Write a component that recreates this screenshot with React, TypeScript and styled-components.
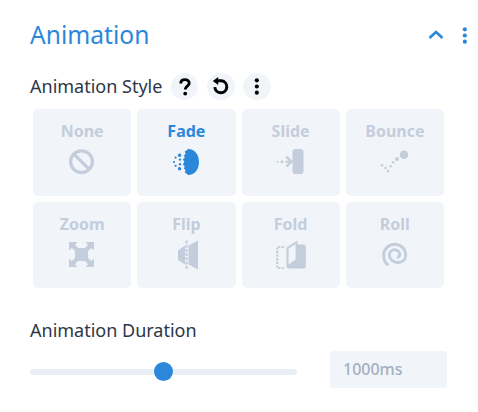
import React from "react";
import styled, { createGlobalStyle } from "styled-components";

const Global = createGlobalStyle`
  html, body { margin: 0; padding: 0; background: #fff; }
  body { font-family: "Noto Sans", "Open Sans", sans-serif; }
`;

const Panel = styled.div`
  width: 478px;
  height: 412px;
  box-sizing: border-box;
  padding: 17px 0 0 30px;
  overflow: hidden;
`;

const Header = styled.header`
  display: flex;
  align-items: center;
  justify-content: space-between;
  width: 439px;
  height: 36px;
`;

const Title = styled.h2`
  margin: 0;
  font-size: 24.6px;
  font-weight: 400;
  line-height: 36px;
  color: #2b87da;
`;

const HeaderTools = styled.div`
  display: flex;
  align-items: center;
  gap: 17px;
`;

const FieldHead = styled.div`
  display: flex;
  align-items: center;
  height: 27px;
  margin-top: 20px;
`;

const Label = styled.span`
  font-size: 18px;
  font-weight: 400;
  line-height: 27px;
  color: #2d3748;
`;

const RoundButton = styled.button`
  display: flex;
  align-items: center;
  justify-content: center;
  width: 27.5px;
  height: 27px;
  padding: 0;
  margin-left: 8.6px;
  border: 0;
  border-radius: 50%;
  background: #f1f5f9;
  color: #000;
`;

const Grid = styled.div`
  display: grid;
  grid-template-columns: repeat(4, 98.25px);
  grid-auto-rows: 86.5px;
  gap: 6px;
  margin: 9px 0 0 3px;
`;

const Tile = styled.div<{ $active?: boolean }>`
  display: flex;
  flex-direction: column;
  align-items: center;
  padding-top: 10px;
  box-sizing: border-box;
  border-radius: 5px;
  background: #f1f5f9;
  color: ${(p) => (p.$active ? "#2b87da" : "#c3cddc")};
`;

const TileName = styled.span`
  font-size: 16px;
  font-weight: 700;
  line-height: 24px;
  height: 24px;
  margin-bottom: 4px;
`;

const Icon = styled.svg`
  display: block;
  width: 30px;
  height: 30px;
  overflow: visible;
  fill: currentColor;
`;

const DurationLabel = styled(Label)`
  display: block;
  margin-top: 29px;
`;

const DurationRow = styled.div`
  display: flex;
  align-items: center;
  gap: 33px;
  margin-top: 7px;
`;

const Track = styled.div`
  position: relative;
  width: 267px;
  height: 6px;
  margin-top: 4px;
  border-radius: 3px;
  background: #e9eef5;
`;

const Thumb = styled.div`
  position: absolute;
  left: 124px;
  top: -6.5px;
  width: 19px;
  height: 19px;
  border-radius: 50%;
  background: #2b87da;
`;

const ValueBox = styled.div`
  width: 117px;
  height: 37px;
  box-sizing: border-box;
  padding-left: 13px;
  border-radius: 3px;
  background: #f1f5f9;
  font-size: 16px;
  font-weight: 500;
  line-height: 37px;
  color: #a3afc2;
`;

const NoneIcon = () => (
  <Icon viewBox="0 0 30 30">
    <circle cx="14.5" cy="14.7" r="10.9" fill="none" stroke="currentColor" strokeWidth="3.2" />
    <path d="M7 7.2 22 22.2" stroke="currentColor" strokeWidth="3.2" />
  </Icon>
);

const FadeIcon = () => (
  <Icon viewBox="0 0 30 30">
    <path d="M17 2C24 2 28 8 28 15S24 28 17 28L15.5 26.5 13.7 25.5 14.6 23 12.8 21.5 13.8 19.5 11.8 17.5 13.4 15 11.8 12.5 13.8 10.5 12.8 8.5 14.6 7 13.7 4.5 15.5 3.5Z" />
    <circle cx="8.6" cy="8.2" r="1.7" />
    <circle cx="9" cy="12.6" r="1.2" />
    <circle cx="9" cy="17.2" r="1.2" />
    <circle cx="8.6" cy="21.8" r="1.7" />
    <circle cx="4.6" cy="10.6" r="1.1" />
    <circle cx="3" cy="15" r="1.1" />
    <circle cx="4.6" cy="18.8" r="1.1" />
  </Icon>
);

const SlideIcon = () => (
  <Icon viewBox="0 0 30 30">
    <rect x="16.5" y="2" width="11" height="25" rx="3" />
    <circle cx="1.5" cy="14.7" r="1" />
    <circle cx="6" cy="14.7" r="1.5" />
    <path d="M10.5 9.7 15.2 14.7 10.5 19.7" fill="none" stroke="currentColor" strokeWidth="2.6" />
    <path d="M9.5 14.7H15" stroke="currentColor" strokeWidth="2" />
  </Icon>
);

const BounceIcon = () => (
  <Icon viewBox="0 0 30 30">
    <circle cx="24" cy="7.7" r="4.3" />
    <circle cx="17" cy="12" r="2" />
    <circle cx="13" cy="15.3" r="1.2" />
    <circle cx="10.7" cy="19.3" r="1.2" />
    <circle cx="8" cy="24.3" r="1.2" />
    <circle cx="5.7" cy="21" r="1.2" />
    <circle cx="2" cy="18.3" r="1.2" />
  </Icon>
);

const ZoomIcon = () => (
  <Icon viewBox="0 0 30 30">
    <rect x="8" y="8" width="13" height="13" />
    <path d="M2 2H10.5L8 4.8 11 8 8 11 4.8 8 2 10.5Z" />
    <path d="M27 2H18.5L21 4.8 18 8 21 11 24.2 8 27 10.5Z" />
    <path d="M2 27H10.5L8 24.2 11 21 8 18 4.8 21 2 18.5Z" />
    <path d="M27 27H18.5L21 24.2 18 21 21 18 24.2 21 27 18.5Z" />
  </Icon>
);

const FlipIcon = () => (
  <Icon viewBox="0 0 30 30">
    <path d="M7 10.5 14 5.5V24.5L7 20Z" />
    <path d="M17.5 5.5 27 .5V29.5L17.5 24.5Z" />
    <path d="M15.5 .5V29.5" fill="none" stroke="currentColor" strokeWidth="2.2" strokeDasharray="3 1.2" />
  </Icon>
);

const FoldIcon = () => (
  <Icon viewBox="0 0 30 30">
    <path d="M8 7H1.2V28H8" fill="none" stroke="currentColor" strokeWidth="2.2" strokeDasharray="2.2 1.4" />
    <path d="M10.5 7.5 21.5.5V4.5H27.5Q29.8 4.5 29.8 6.8V26Q29.8 28.5 27.5 28.5H12.5Q10.5 28.5 10.5 26.5Z" />
    <path d="M12.6 8.6 19.6 4V19.6L12.6 24.5Z" fill="#f1f5f9" />
  </Icon>
);

const RollIcon = () => (
  <Icon viewBox="0 0 30 30">
    <path
      d="M8.5 25C5 23.5 3.7 19.5 3.7 15.2 3.7 9 8.6 4.2 14.7 4.2 20.8 4.2 25.7 9 25.7 15 25.7 19.5 22.5 22.5 18 22.5 13 22.5 9.3 19 9.3 15 9.3 12 11.7 9.8 14.7 9.8 17.7 9.8 19.8 12 19.8 14.5 19.8 16.2 18.7 17.3 17 17"
      fill="none"
      stroke="currentColor"
      strokeWidth="2.9"
    />
  </Icon>
);

const Dots = ({ color }: { color: string }) => (
  <svg width="7.7" height="17" viewBox="0 0 10 22" fill={color} style={{ display: "block" }}>
    <circle cx="5" cy="3" r="2.7" />
    <circle cx="5" cy="11" r="2.7" />
    <circle cx="5" cy="19" r="2.7" />
  </svg>
);

const styles = [
  { name: "None", icon: <NoneIcon /> },
  { name: "Fade", icon: <FadeIcon />, active: true },
  { name: "Slide", icon: <SlideIcon /> },
  { name: "Bounce", icon: <BounceIcon /> },
  { name: "Zoom", icon: <ZoomIcon /> },
  { name: "Flip", icon: <FlipIcon /> },
  { name: "Fold", icon: <FoldIcon /> },
  { name: "Roll", icon: <RollIcon /> },
];

export default function App() {
  return (
    <Panel>
      <Global />
      <Header>
        <Title>Animation</Title>
        <HeaderTools>
          <svg width="16" height="10" viewBox="0 0 16 10" style={{ display: "block" }}>
            <path d="M1.5 8 8 2 14.5 8" fill="none" stroke="#2b87da" strokeWidth="2.6" />
          </svg>
          <Dots color="#2b87da" />
        </HeaderTools>
      </Header>
      <FieldHead>
        <Label>Animation Style</Label>
        <RoundButton>
          <svg width="14" height="18" viewBox="0 0 14 18">
            <path
              d="M2.8 5.4C2.8 3 4.6 1.6 7 1.6S11.2 3.2 11.2 5.2C11.2 8.2 7.2 8.2 7.2 11.6"
              fill="none"
              stroke="#000"
              strokeWidth="2.9"
            />
            <circle cx="7.2" cy="15.6" r="1.9" />
          </svg>
        </RoundButton>
        <RoundButton>
          <svg width="19" height="19" viewBox="0 0 19 19">
            <path d="M5.5 3.8H10.5A6 6 0 1 1 3.8 10.2" fill="none" stroke="#000" strokeWidth="3" />
            <path d="M7.2 0V8L1.8 3.9Z" />
          </svg>
        </RoundButton>
        <RoundButton>
          <Dots color="#000" />
        </RoundButton>
      </FieldHead>
      <Grid>
        {styles.map((s) => (
          <Tile key={s.name} $active={s.active}>
            <TileName>{s.name}</TileName>
            {s.icon}
          </Tile>
        ))}
      </Grid>
      <DurationLabel>Animation Duration</DurationLabel>
      <DurationRow>
        <Track>
          <Thumb />
        </Track>
        <ValueBox>1000ms</ValueBox>
      </DurationRow>
    </Panel>
  );
}
